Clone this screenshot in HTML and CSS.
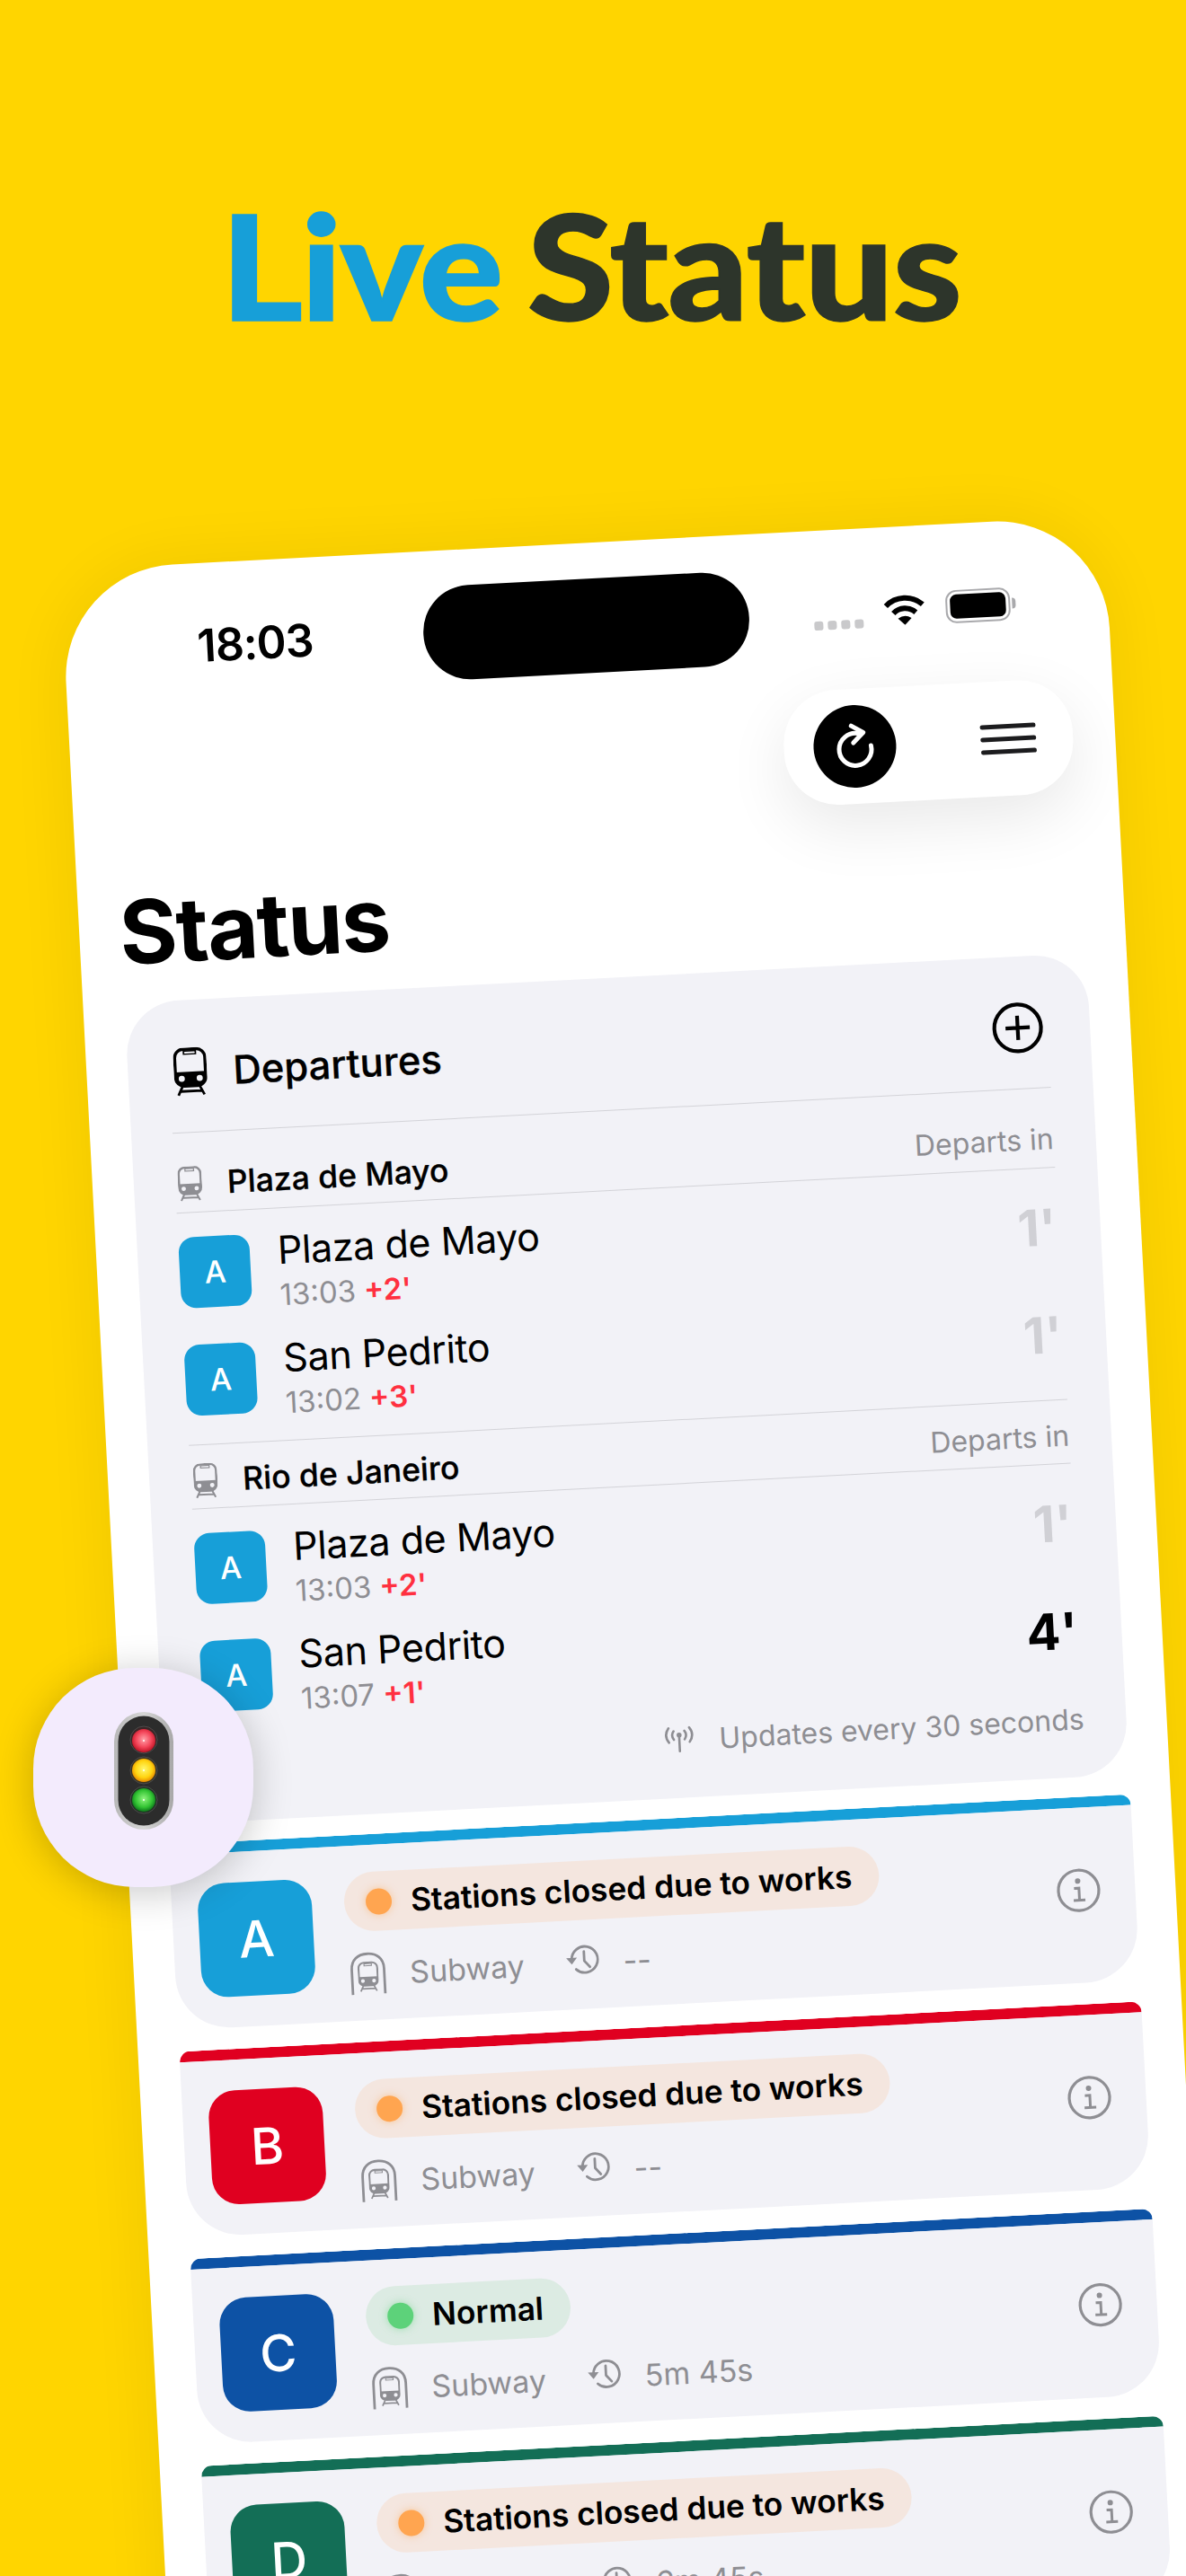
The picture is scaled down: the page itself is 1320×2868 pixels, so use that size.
FILE: index.html
```html
<!DOCTYPE html>
<html lang="en">
<head>
<meta charset="utf-8">
<title>Live Status</title>
<link rel="stylesheet" href="styles.css">
</head>
<body>
<svg class="defs" width="0" height="0" aria-hidden="true">
  <symbol id="train" viewBox="0 0 37 54">
    <rect x="1.7" y="1.7" width="33.6" height="41" rx="9.5" fill="none" stroke="currentColor" stroke-width="3.4"/>
    <path d="M2 27h33v7c0 5-4 8.700-9 8.700H11c-5 0-9-3.700-9-8.700z" fill="currentColor"/>
    <path d="M11 3h15v5H11z" fill="currentColor"/>
    <rect x="12.500" y="4.500" width="12" height="2" rx="1" fill="#f2f2f7"/>
    <circle cx="8.500" cy="34.500" r="3.400" fill="#f2f2f7"/>
    <circle cx="28.500" cy="34.500" r="3.400" fill="#f2f2f7"/>
    <path d="M9 43 4 53M28 43l5 10M7 48.500h23" fill="none" stroke="currentColor" stroke-width="2.800"/>
  </symbol>
  <symbol id="tunnel" viewBox="0 0 41 48">
    <path d="M2.500 47V19C2.500 8 10 2 20.500 2S38.500 8 38.500 19V47" fill="none" stroke="currentColor" stroke-width="2.800"/>
    <use href="#train" x="9" y="10" width="23" height="35"/>
  </symbol>
  <symbol id="clock" viewBox="0 0 38 38">
    <path d="M7.500 19A14.500 14.500 0 1 1 12 29.500" fill="none" stroke="currentColor" stroke-width="2.800" stroke-linecap="round"/>
    <path d="M1.500 16.500h12L7.500 24z" fill="currentColor"/>
    <path d="M21.500 10v10.500l6 7" fill="none" stroke="currentColor" stroke-width="2.800" stroke-linecap="round" stroke-linejoin="round"/>
  </symbol>
  <symbol id="info" viewBox="0 0 50 50">
    <circle cx="25" cy="25" r="22.500" fill="none" stroke="currentColor" stroke-width="3.200"/>
    <circle cx="24.500" cy="14.500" r="3" fill="currentColor"/>
    <path d="M20 22.500h5.500v13M19 36h13" fill="none" stroke="currentColor" stroke-width="3"/>
  </symbol>
</svg>

<main class="poster">
  <h1 class="headline"><span class="headline-live">Live</span> <span class="headline-status">Status</span></h1>

  <section class="phone">
    <div class="statusbar">
      <span class="clock-time">18:03</span>
      <div class="island"></div>
      <div class="cell-dots"><i></i><i></i><i></i><i></i></div>
      <svg class="wifi" viewBox="0 0 48 35"><path d="M3.500 13A30 30 0 0 1 44.500 13M11.500 21.500A18 18 0 0 1 36.500 21.500" fill="none" stroke="#000" stroke-width="6"/><path d="M16.500 27.500Q24 22.500 31.500 27.500L24 35z" fill="#000"/></svg>
      <div class="battery"><div class="battery-body"><div class="battery-fill"></div></div><div class="battery-cap"></div></div>
    </div>

    <div class="toolbar">
      <div class="toolbar-pill">
        <div class="refresh">
          <svg viewBox="0 0 92 92" width="92" height="92"><path d="M50 31.800A18 18 0 1 0 64 46" fill="none" stroke="#fff" stroke-width="5" stroke-linecap="round"/><path d="M43 23 56 31 44.500 42" fill="none" stroke="#fff" stroke-width="5" stroke-linecap="round" stroke-linejoin="round"/></svg>
        </div>
        <div class="burger"><i></i><i></i><i></i></div>
      </div>
    </div>

    <h2 class="page-title">Status</h2>

    <section class="departures">
      <header class="dep-head">
        <svg class="icon-train-lg"><use href="#train"/></svg>
        <span class="dep-title">Departures</span>
        <svg class="icon-plus" viewBox="0 0 57 57"><circle cx="28.500" cy="28.500" r="26" fill="none" stroke="#000" stroke-width="4.200"/><path d="M28.500 15v27M15 28.500h27" fill="none" stroke="#000" stroke-width="4.200"/></svg>
      </header>

      <div class="station station-first">
        <svg class="icon-train-sm"><use href="#train"/></svg>
        <span class="station-name">Plaza de Mayo</span>
        <span class="departs-in">Departs in</span>
      </div>
      <div class="dep-rows">
        <div class="dep-row">
          <div class="line-mini">A</div>
          <div class="dep-text"><div class="dep-name">Plaza de Mayo</div><div class="dep-sub">13:03 <b>+2'</b></div></div>
          <div class="dep-min">1'</div>
        </div>
        <div class="dep-row">
          <div class="line-mini">A</div>
          <div class="dep-text"><div class="dep-name">San Pedrito</div><div class="dep-sub">13:02 <b>+3'</b></div></div>
          <div class="dep-min">1'</div>
        </div>
      </div>

      <div class="station">
        <svg class="icon-train-sm"><use href="#train"/></svg>
        <span class="station-name">Rio de Janeiro</span>
        <span class="departs-in">Departs in</span>
      </div>
      <div class="dep-rows dep-rows-last">
        <div class="dep-row">
          <div class="line-mini">A</div>
          <div class="dep-text"><div class="dep-name">Plaza de Mayo</div><div class="dep-sub">13:03 <b>+2'</b></div></div>
          <div class="dep-min">1'</div>
        </div>
        <div class="dep-row">
          <div class="line-mini">A</div>
          <div class="dep-text"><div class="dep-name">San Pedrito</div><div class="dep-sub">13:07 <b>+1'</b></div></div>
          <div class="dep-min dep-min-now">4'</div>
        </div>
      </div>

      <footer class="dep-foot">
        <svg class="icon-antenna" viewBox="0 0 34 30"><g fill="none" stroke="#8e8e93" stroke-width="2.600" stroke-linecap="round"><path d="M17 12v16"/><path d="M11 5.500Q7.500 10 11 15M23 5.500Q26.500 10 23 15"/><path d="M5.500 2Q-.5 10 5.500 18M28.500 2Q34.500 10 28.500 18"/></g><circle cx="17" cy="10" r="2.800" fill="#8e8e93"/></svg>
        <span>Updates every 30 seconds</span>
      </footer>
    </section>

    <div class="lines">
      <article class="line-card line-a">
        <div class="line-badge">A</div>
        <div class="line-main">
          <div class="state state-warn"><i></i><span>Stations closed due to works</span></div>
          <div class="meta"><svg class="icon-tunnel"><use href="#tunnel"/></svg><span class="meta-type">Subway</span><svg class="icon-clock"><use href="#clock"/></svg><span>--</span></div>
        </div>
        <svg class="icon-info"><use href="#info"/></svg>
      </article>
      <article class="line-card line-b">
        <div class="line-badge">B</div>
        <div class="line-main">
          <div class="state state-warn"><i></i><span>Stations closed due to works</span></div>
          <div class="meta"><svg class="icon-tunnel"><use href="#tunnel"/></svg><span class="meta-type">Subway</span><svg class="icon-clock"><use href="#clock"/></svg><span>--</span></div>
        </div>
        <svg class="icon-info"><use href="#info"/></svg>
      </article>
      <article class="line-card line-c">
        <div class="line-badge">C</div>
        <div class="line-main">
          <div class="state state-ok"><i></i><span>Normal</span></div>
          <div class="meta"><svg class="icon-tunnel"><use href="#tunnel"/></svg><span class="meta-type">Subway</span><svg class="icon-clock"><use href="#clock"/></svg><span>5m 45s</span></div>
        </div>
        <svg class="icon-info"><use href="#info"/></svg>
      </article>
      <article class="line-card line-d">
        <div class="line-badge">D</div>
        <div class="line-main">
          <div class="state state-warn"><i></i><span>Stations closed due to works</span></div>
          <div class="meta"><svg class="icon-tunnel"><use href="#tunnel"/></svg><span class="meta-type">Subway</span><svg class="icon-clock"><use href="#clock"/></svg><span>6m 45s</span></div>
        </div>
        <svg class="icon-info"><use href="#info"/></svg>
      </article>
    </div>
  </section>

  <div class="app-icon">
    <svg class="signal" viewBox="0 0 66 131" width="66" height="131">
      <defs>
        <radialGradient id="lr" cx=".5" cy=".45" r=".55"><stop offset="0" stop-color="#ffa0a8"/><stop offset=".6" stop-color="#f4465a"/><stop offset="1" stop-color="#c01426"/></radialGradient>
        <radialGradient id="ly" cx=".5" cy=".45" r=".55"><stop offset="0" stop-color="#fff86e"/><stop offset=".65" stop-color="#ffd410"/><stop offset="1" stop-color="#e88a00"/></radialGradient>
        <radialGradient id="lg" cx=".5" cy=".45" r=".55"><stop offset="0" stop-color="#90f47e"/><stop offset=".65" stop-color="#33c433"/><stop offset="1" stop-color="#0e7a1c"/></radialGradient>
        <linearGradient id="rim" x1="0" x2="1"><stop offset="0" stop-color="#b8b8b8"/><stop offset=".5" stop-color="#d6d6d6"/><stop offset="1" stop-color="#a8a8a8"/></linearGradient>
      </defs>
      <rect x="0" y="0" width="66" height="131" rx="33" fill="url(#rim)"/>
      <rect x="4.500" y="4.500" width="57" height="122" rx="28.500" fill="#2c2c2c"/>
      <circle cx="33" cy="31" r="15" fill="#3a2526" stroke="#4d4d4d"/>
      <circle cx="33" cy="32" r="13" fill="url(#lr)"/>
      <circle cx="33" cy="65" r="15" fill="#3a3420" stroke="#4d4d4d"/>
      <circle cx="33" cy="65" r="13" fill="url(#ly)"/>
      <circle cx="33" cy="98" r="15" fill="#1f3322" stroke="#4d4d4d"/>
      <circle cx="33" cy="98" r="13" fill="url(#lg)"/>
      <circle cx="33" cy="32" r="1" fill="#fff"/><circle cx="33" cy="65" r="1" fill="#fff"/><circle cx="33" cy="98" r="1" fill="#fff"/>
    </svg>
  </div>
</main>
</body>
</html>
```
FILE: styles.css
```css
* { box-sizing: border-box; }
html, body { margin: 0; padding: 0; }
body { background: #ffd500; font-family: Inter, "Liberation Sans", sans-serif; color: #000; }
.defs { position: absolute; }
svg { display: block; flex: none; }

.poster { position: relative; width: 1320px; height: 2868px; overflow: hidden; background: #ffd500; padding-top: 195px; }

.headline { margin: 0; height: 200px; padding-right: 4px; line-height: 200px; text-align: center; font-family: Lato, sans-serif; font-weight: 900; font-size: 162px; letter-spacing: -2px; word-spacing: -10px; transform: scaleX(1.08); -webkit-text-stroke: 1.5px currentColor; }
.headline-live { color: #179fd8; }
.headline-status { color: #2d352b; letter-spacing: -1px; }

.phone { width: 1163px; height: 2500px; margin: 240px 0 0 67.4px; background: #fff; border-radius: 125px 125px 0 0; transform: rotate(-3deg); transform-origin: 0 0; box-shadow: 0 0 70px rgba(0,0,0,.07); }

.statusbar { display: flex; align-items: center; height: 143px; padding: 41px 0 0 148px; }
.clock-time { width: 129px; font-size: 50px; font-weight: 600; letter-spacing: -1px; line-height: 1; margin-right: 122.6px; white-space: nowrap; }
.island { width: 363px; height: 105px; border-radius: 52px; background: #000; }
.cell-dots { display: flex; gap: 5px; margin: 28px 0 0 72.400px; }
.cell-dots i { width: 10px; height: 10px; border-radius: 3px; background: #c9c9cb; }
.wifi { width: 48px; height: 35px; margin-left: 22px; }
.battery { display: flex; align-items: center; margin-left: 22px; }
.battery-body { width: 72px; height: 37px; padding: 3px; border: 2px solid #a9a9ac; border-radius: 12px; }
.battery-fill { width: 100%; height: 100%; background: #000; border-radius: 7px; }
.battery-cap { width: 4px; height: 12px; margin-left: 2px; background: #a9a9ac; border-radius: 0 4px 4px 0; }

.toolbar { display: flex; justify-content: flex-end; padding: 35px 47px 0 0; }
.toolbar-pill { display: flex; align-items: center; width: 322px; height: 128px; padding-left: 33px; border-radius: 60px; background: #fff; box-shadow: 0 24px 70px rgba(0,0,0,.09); }
.refresh { width: 92px; height: 92px; border-radius: 50%; background: #000; }
.burger { display: flex; flex-direction: column; gap: 9px; margin-left: 94px; }
.burger i { display: block; width: 62px; height: 5px; border-radius: 3px; background: #1c1c1e; }

.page-title { margin: 51px 0 28px 45px; height: 100px; font-size: 98px; line-height: 100px; font-weight: 700; letter-spacing: -1.500px; }

.departures { margin: 0 45px 0 46px; padding: 0 47px 45px 46px; background: #f2f2f7; border-radius: 60px; }
.dep-head { display: flex; align-items: center; height: 147.500px; padding-top: 13px; border-bottom: 1.500px solid #d3d3d8; }
.icon-train-lg { width: 37px; height: 54px; margin-left: 5px; color: #000; }
.dep-title { margin-left: 29px; font-size: 43.500px; font-weight: 500; -webkit-text-stroke: .3px currentColor; }
.icon-plus { width: 57px; height: 57px; margin-left: auto; margin-right: 5px; }

.station { display: flex; align-items: center; height: 72px; padding-top: 8px; border-top: 1.500px solid #d3d3d8; border-bottom: 1.500px solid #d3d3d8; }
.station-first { border-top: 0; margin-top: 17.500px; }
.icon-train-sm { width: 27px; height: 39px; margin-left: 3px; color: #8e8e93; }
.station-name { margin-left: 28px; font-size: 35.500px; font-weight: 500; -webkit-text-stroke: .3px currentColor; }
.departs-in { margin-left: auto; font-size: 32px; color: #8e8e93; }

.dep-rows { padding: 6px 0 12px; }
.dep-rows-last { padding-bottom: 0; }
.dep-row { display: flex; align-items: center; height: 120px; }
.line-mini { display: flex; align-items: center; justify-content: center; width: 79px; height: 79px; border-radius: 17px; background: #179fd8; color: #fff; font-size: 34px; font-weight: 500; }
.dep-text { margin-left: 31px; padding-top: 6px; }
.dep-name { font-size: 43px; line-height: 52px; letter-spacing: -.4px; }
.dep-sub { margin-top: 2px; font-size: 33px; line-height: 44px; color: #8e8e93; }
.dep-sub b { color: #ff3040; font-weight: 600; }
.dep-min { margin-left: auto; margin-right: 2px; font-size: 56px; font-weight: 700; color: #d0d0d5; }
.dep-min-now { color: #000; }

.dep-foot { display: flex; align-items: center; justify-content: flex-end; height: 40px; margin-top: 18px; font-size: 32px; color: #8e8e93; }
.icon-antenna { width: 34px; height: 30px; margin-right: 27px; }

.lines { display: flex; flex-direction: column; gap: 24px; margin: 22px 45px 0 46px; }
.line-card { display: flex; height: 207px; padding: 34px 38px 0 29px; background: #f2f2f7; border-top: 12px solid #179fd8; border-radius: 12px 12px 60px 60px; }
.line-a { border-top-color: #179fd8; }
.line-b { border-top-color: #e00020; }
.line-c { border-top-color: #0d52a5; }
.line-d { border-top-color: #136e56; }
.line-badge { display: flex; align-items: center; justify-content: center; flex: none; width: 127px; height: 127px; border-radius: 30px; color: #fff; font-size: 56px; font-weight: 500; }
.line-a .line-badge { background: #179fd8; }
.line-b .line-badge { background: #e00020; }
.line-c .line-badge { background: #0d52a5; }
.line-d .line-badge { background: #136e56; }
.line-main { margin: -4px 0 0 36px; }
.state { display: inline-flex; align-items: center; height: 66px; padding: 0 30px 0 24px; border-radius: 33px; font-size: 35.300px; font-weight: 600; }
.state i { width: 29px; height: 29px; margin-right: 21px; border-radius: 50%; }
.state-warn { background: #f4e6df; }
.state-warn i { background: #ffa550; box-shadow: 0 0 8px rgba(255,165,80,.5); }
.state-ok { background: #dcebe3; }
.state-ok i { background: #5dd27a; box-shadow: 0 0 8px rgba(93,210,122,.5); }
.meta { display: flex; align-items: center; height: 48px; margin-top: 23px; margin-left: 2px; font-size: 34px; color: #8e8e93; }
.icon-tunnel { width: 41px; height: 48px; color: #8e8e93; }
.meta-type { margin-left: 26px; }
.icon-clock { width: 38px; height: 38px; margin: -6px 27px 0 45px; color: #8e8e93; }
.icon-info { width: 50px; height: 50px; margin: 33px 0 0 auto; color: #8e8e93; }

.app-icon { position: absolute; left: 37px; top: 1857px; display: flex; align-items: center; justify-content: center; width: 245px; height: 244px; border-radius: 46%; background: #f3ebfd; box-shadow: 0 6px 44px rgba(0,0,0,.22); }
.signal { margin-bottom: 16px; }
```
